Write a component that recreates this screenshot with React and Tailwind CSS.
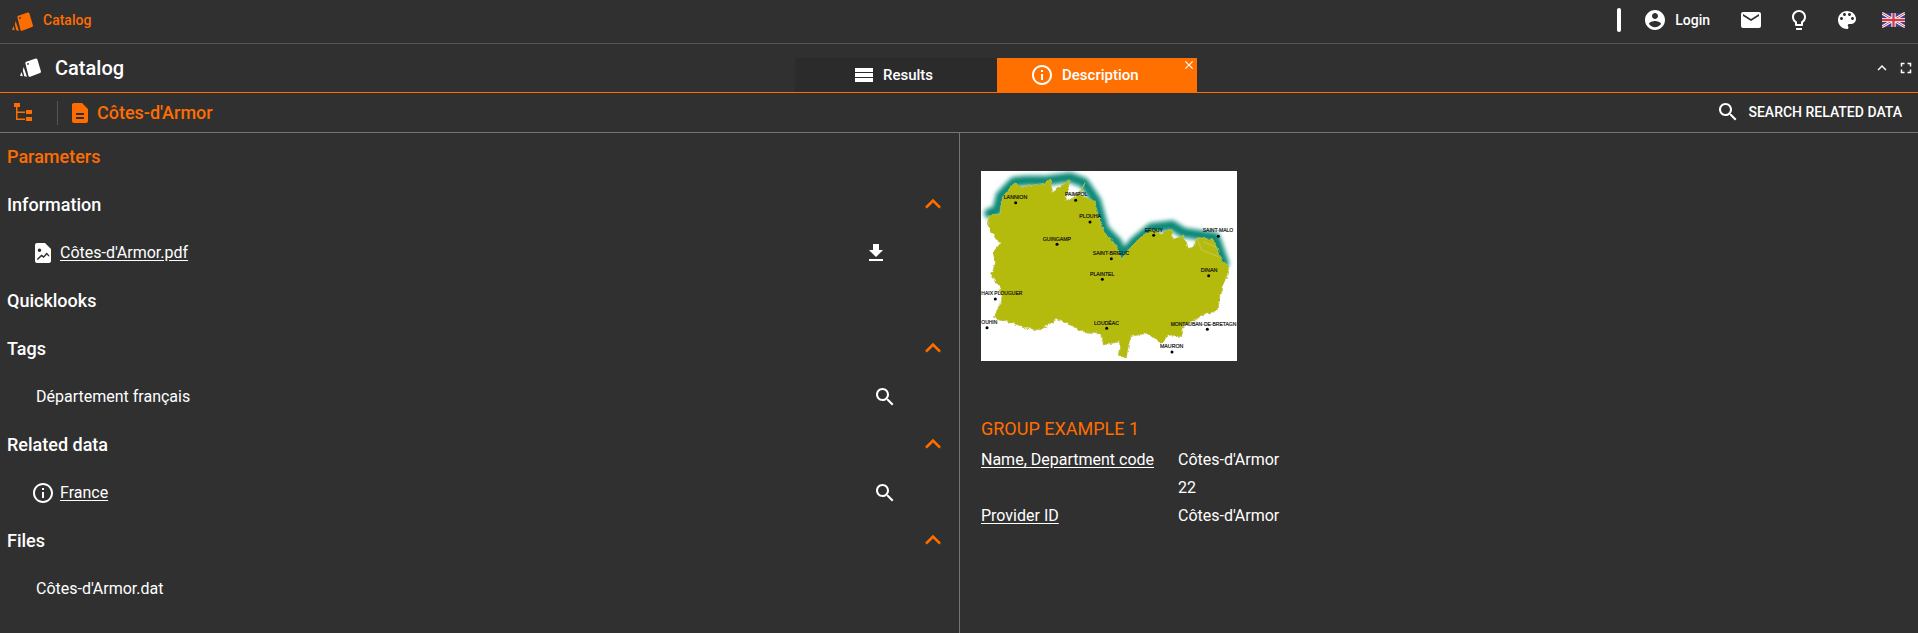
const P = {
  account: "M12 2C6.48 2 2 6.48 2 12s4.48 10 10 10 10-4.48 10-10S17.52 2 12 2zm0 3c1.66 0 3 1.34 3 3s-1.34 3-3 3-3-1.34-3-3 1.34-3 3-3zm0 14.2c-2.5 0-4.71-1.28-6-3.22.03-1.99 4-3.08 6-3.08 1.99 0 5.97 1.09 6 3.08-1.29 1.94-3.5 3.22-6 3.22z",
  mail: "M20 4H4c-1.1 0-1.99.9-1.99 2L2 18c0 1.1.9 2 2 2h16c1.1 0 2-.9 2-2V6c0-1.1-.9-2-2-2zm0 4l-8 5-8-5V6l8 5 8-5v2z",
  bulb: "M9 21c0 .55.45 1 1 1h4c.55 0 1-.45 1-1v-1H9v1zm3-19C8.14 2 5 5.14 5 9c0 2.38 1.19 4.47 3 5.74V17c0 .55.45 1 1 1h6c.55 0 1-.45 1-1v-2.26c1.81-1.27 3-3.36 3-5.74 0-3.86-3.14-7-7-7zm2.85 11.1l-.85.6V16h-4v-2.3l-.85-.6C7.8 12.16 7 10.63 7 9c0-2.76 2.24-5 5-5s5 2.24 5 5c0 1.63-.8 3.16-2.15 4.1z",
  palette: "M12 3c-4.97 0-9 4.03-9 9s4.03 9 9 9c.83 0 1.5-.67 1.5-1.5 0-.39-.15-.74-.39-1.01-.23-.26-.38-.61-.38-.99 0-.83.67-1.5 1.5-1.5H16c2.76 0 5-2.24 5-5 0-4.42-4.03-8-9-8zm-5.5 9c-.83 0-1.5-.67-1.5-1.5S5.67 9 6.5 9 8 9.67 8 10.5 7.33 12 6.5 12zm3-4C8.67 8 8 7.33 8 6.5S8.67 5 9.5 5s1.5.67 1.5 1.5S10.33 8 9.5 8zm5 0c-.83 0-1.5-.67-1.5-1.5S13.67 5 14.5 5s1.5.67 1.5 1.5S15.33 8 14.5 8zm3 4c-.83 0-1.5-.67-1.5-1.5S16.67 9 17.5 9s1.5.67 1.5 1.5-.67 1.5-1.5 1.5z",
  search: "M15.5 14h-.79l-.28-.27C15.41 12.59 16 11.11 16 9.5 16 5.91 13.09 3 9.5 3S3 5.91 3 9.5 5.91 16 9.5 16c1.61 0 3.09-.59 4.23-1.57l.27.28v.79l5 4.99L20.49 19l-4.99-5zm-6 0C7.01 14 5 11.99 5 9.5S7.01 5 9.5 5 14 7.01 14 9.5 11.99 14 9.5 14z",
  info: "M11 7h2v2h-2zm0 4h2v6h-2zm1-9C6.48 2 2 6.48 2 12s4.48 10 10 10 10-4.48 10-10S17.52 2 12 2zm0 18c-4.41 0-8-3.59-8-8s3.59-8 8-8 8 3.59 8 8-3.59 8-8 8z",
  doc: "M14 2H6c-1.1 0-1.99.9-1.99 2L4 20c0 1.1.89 2 1.99 2H18c1.1 0 2-.9 2-2V8l-6-6zm2 16H8v-2h8v2zm0-4H8v-2h8v2z",
  download: "M19 9h-4V3H9v6H5l7 7 7-7zM5 18v2h14v-2H5z",
  less: "M12 8l-6 6 1.41 1.41L12 10.83l4.59 4.58L18 14z",
  full: "M7 14H5v5h5v-2H7v-3zm-2-4h2V7h3V5H5v5zm12 7h-3v2h5v-5h-2v3zM14 5v2h3v3h2V5h-5z",
  close: "M19 6.41L17.59 5 12 10.59 6.41 5 5 6.41 10.59 12 5 17.59 6.41 19 12 13.41 17.59 19 19 17.59 13.41 12z",
  lines: "M3 5h18v4H3zM3 10h18v4H3zM3 15h18v4H3z",
  tree: "M3 3h6v4H3zM5 7h1.500v13H5zM5 11.500h9V13H5zM5 18.500h9V20H5zM15 10h6v4h-6zM15 17h6v4h-6z",
  filePic: "M6 2h8l6 6v12c0 1.1-.9 2-2 2H6c-1.100 0-2-.9-2-2V4c0-1.100.9-2 2-2zM8.500 7.500a1.800 1.800 0 1 0 0 3.600 1.800 1.800 0 0 0 0-3.600zM5.800 18l4.700-4.500 2.200 1.500 3-3.500 2.500 2.700v1.600l-2.500-2-3 3.300-2.200-1.500-3.700 3.500z",
};

function Icon({ d, className, rule }) {
  return (
    <svg viewBox="0 0 24 24" className={className} fill="currentColor">
      <path d={d} fillRule={rule} />
    </svg>
  );
}

function Logo({ className }) {
  return (
    <svg viewBox="0 0 22 22" className={className} fill="currentColor">
      <path fillRule="evenodd" d="M6.300 4.700 15.700 1.600c.8-.2 1.400.1 1.700.9l3.500 11.800c.2.800-.1 1.400-.9 1.700l-9.800 3.700c-.8.300-1.400 0-1.700-.8L5.400 6.400c-.2-.8.100-1.400.9-1.700zM8 6a.9.9 0 1 0 0 1.800A.9.9 0 0 0 8 6z" />
      <path d="M3.600 10 7 19.800 4.300 19.300 2.900 13.500z" />
      <path d="M1.600 15 2.800 19.200 0 18.800z" />
    </svg>
  );
}

function Flag() {
  return (
    <svg viewBox="0 0 60 36" className="h-[16px] w-[23px]">
      <rect width="60" height="36" fill="#3d3f8f" />
      <path d="M0 0 60 36M60 0 0 36" stroke="#fff" strokeWidth="7" />
      <path d="M0 0 60 36M60 0 0 36" stroke="#cf3a4b" strokeWidth="2.500" />
      <path d="M30 0V36M0 18H60" stroke="#fff" strokeWidth="11" />
      <path d="M30 0V36M0 18H60" stroke="#cf3a4b" strokeWidth="6" />
    </svg>
  );
}

const outline =
  "55,170 75,162 90,165 95,115 130,72 165,80 190,75 225,70 240,58 248,95 270,80 300,60 285,125 310,115 330,95 345,68 330,105 375,125 385,170 400,210 415,235 440,255 455,300 475,270 495,248 520,225 545,210 575,220 605,205 610,240 640,225 655,265 670,262 680,232 730,240 755,300 778,320 765,370 750,400 745,450 690,470 640,500 635,530 600,525 575,550 530,520 480,530 470,590 445,590 450,545 400,555 395,520 340,515 300,495 260,478 210,510 170,505 130,490 70,472 95,420 90,385 65,345 75,310 70,280 90,250 55,200";
const coast =
  "58,160 82,152 92,108 132,66 165,62 230,62 300,52 342,68 378,122 402,208 442,248 456,290 495,244 545,204 605,196 640,218 680,224 735,232 762,310";
const towns = [
  ["LANNION", 101, 117, 71, 137, 128],
  ["PAIMPOL", 285, 109, 67, 317, 121],
  ["PLOUHA", 328, 174, 65, 360, 186],
  ["GUINGAMP", 218, 242, 85, 261, 253],
  ["ERQUY", 524, 215, 55, 551, 226],
  ["SAINT-MALO", 698, 216, 92, 745, 229],
  ["SAINT-BRIEUC", 368, 285, 110, 424, 296],
  ["PLAINTEL", 360, 348, 73, 397, 358],
  ["DINAN", 692, 336, 50, 716, 347],
  ["HAIX PLOUGUER", 34, 406, 123, 76, 417],
  ["OUHIN", 34, 491, 48, 51, 503],
  ["LOUDÉAC", 372, 495, 75, 410, 505],
  ["MONTAUBAN-DE-BRETAGN", 602, 498, 197, 712, 508],
  ["MAURON", 570, 564, 70, 606, 576],
];

function BrittanyMap() {
  return (
    <svg viewBox="33 33 768 570" className="block h-[190px] w-[256px] bg-white">
      <defs>
        <filter id="coastBlur" x="-10%" y="-15%" width="120%" height="130%">
          <feGaussianBlur stdDeviation="7" />
        </filter>
        <filter id="rough" x="-5%" y="-5%" width="110%" height="110%">
          <feTurbulence type="fractalNoise" baseFrequency="0.07" numOctaves="2" seed="4" />
          <feDisplacementMap in="SourceGraphic" scale="14" xChannelSelector="R" yChannelSelector="G" />
        </filter>
      </defs>
      <polyline points={coast} fill="none" stroke="#0d8a78" strokeWidth="30" strokeLinejoin="round" strokeLinecap="round" filter="url(#coastBlur)" />
      <g filter="url(#rough)">
        <polygon points={outline} fill="#b5bb0e" stroke="#bfc25a" strokeWidth="2" />
      </g>
      <path d="M680 235 695 270 745 290M700 245 740 262" fill="none" stroke="#c9cc8a" strokeWidth="2" />
      {towns.map(([t, x, y, w, dx, dy]) => (
        <g key={t}>
          <circle cx={dx} cy={dy} r="4.500" fill="#000" />
          <text x={x} y={y} textLength={w} lengthAdjust="spacingAndGlyphs" fontSize="15" fill="#111" stroke="#111" strokeWidth="0.500" fontFamily="'Liberation Sans', sans-serif">{t}</text>
        </g>
      ))}
    </svg>
  );
}

function Section({ title, open }) {
  return (
    <div className="flex h-12 items-center pb-[2px] pl-[7px] pr-[10px] text-[18px] font-medium text-white">
      <span>{title}</span>
      {open && <Icon d={P.less} className="ml-auto h-8 w-8 text-[#ff6d00]" />}
    </div>
  );
}

function Item({ icon, text, link, action, actionClass }) {
  return (
    <div className="flex h-12 items-center pl-[36px] text-base text-white">
      {icon && <Icon d={icon} className="mr-[5px] -ml-[5px] h-6 w-6 shrink-0" rule="evenodd" />}
      <span className={link ? "underline underline-offset-2" : ""}>{text}</span>
      {action && <Icon d={action} className={actionClass} />}
    </div>
  );
}

function Detail({ label, value }) {
  return (
    <div className="flex h-7 items-center text-base text-white">
      <span className="w-[197px] underline underline-offset-2">{label}</span>
      <span>{value}</span>
    </div>
  );
}

export default function App() {
  return (
    <div className="flex h-[633px] w-[1918px] flex-col overflow-hidden bg-[#303030] text-white" style={{ fontFamily: "Roboto, sans-serif" }}>
      <header className="flex h-11 shrink-0 items-center border-b border-[#555555] pb-[4px] pl-3 pr-[13px]">
        <Logo className="mt-[4px] h-[22px] w-[22px] text-[#ff6d00]" />
        <span className="ml-[9px] text-sm font-medium text-[#ff6d00]">Catalog</span>
        <div className="ml-auto mr-[22px] h-6 w-1 rounded-sm bg-white" />
        <Icon d={P.account} className="h-6 w-6" />
        <span className="ml-2 mr-[29px] text-sm font-medium">Login</span>
        <Icon d={P.mail} className="mr-6 h-6 w-6" />
        <Icon d={P.bulb} className="mr-6 h-6 w-6" />
        <Icon d={P.palette} className="mr-[23px] h-6 w-6" />
        <Flag />
      </header>

      <div className="grid h-[49px] shrink-0 grid-cols-[795px_402px_1fr] border-b border-[#ff6d00]">
        <div className="flex items-center pl-5">
          <Logo className="h-[22px] w-[22px] text-white" />
          <span className="ml-[13px] text-xl font-medium">Catalog</span>
        </div>
        <div className="mt-[14px] grid grid-cols-[202px_200px] text-[15px] font-medium">
          <div className="flex items-center gap-[7px] bg-[#2b2b2b] pl-[57px]">
            <Icon d={P.lines} className="h-6 w-6" />
            <span>Results</span>
          </div>
          <div className="relative flex items-center gap-2 bg-[#ff7000] pl-[33px]">
            <Icon d={P.info} className="h-6 w-6" />
            <span>Description</span>
            <Icon d={P.close} className="absolute right-[1px] top-0 h-[14px] w-[14px]" />
          </div>
        </div>
        <div className="flex items-center justify-end gap-[6px] pr-[3px]">
          <Icon d={P.less} className="h-[18px] w-[18px]" />
          <Icon d={P.full} className="h-[18px] w-[18px]" />
        </div>
      </div>

      <div className="flex h-[40px] shrink-0 items-center border-b border-[#757575] pl-[11px] pr-4">
        <Icon d={P.tree} className="mb-[2px] h-6 w-6 text-[#ff6d00]" />
        <div className="ml-[22px] h-6 w-px bg-[#555555]" />
        <Icon d={P.doc} className="ml-[10px] h-6 w-6 text-[#ff6d00]" />
        <span className="ml-[5px] text-lg font-medium text-[#ff6d00]">Côtes-d'Armor</span>
        <Icon d={P.search} className="mb-[2px] ml-auto h-6 w-6" />
        <span className="mb-[2px] ml-[8px] text-sm font-medium">SEARCH RELATED DATA</span>
      </div>

      <main className="grid min-h-0 flex-1 grid-cols-[960px_1fr]">
        <section className="overflow-hidden border-r border-[#757575]">
          <div className="flex h-12 items-center pb-[2px] pl-[7px] text-[18px] font-medium text-[#ff6d00]">Parameters</div>
          <Section title="Information" open />
          <Item icon={P.filePic} text="Côtes-d'Armor.pdf" link action={P.download} actionClass="ml-auto mr-[71px] h-6 w-6" />
          <Section title="Quicklooks" />
          <Section title="Tags" open />
          <Item text="Département français" action={P.search} actionClass="ml-auto mr-[62px] h-6 w-6" />
          <Section title="Related data" open />
          <Item icon={P.info} text="France" link action={P.search} actionClass="ml-auto mr-[62px] h-6 w-6" />
          <Section title="Files" open />
          <Item text="Côtes-d'Armor.dat" />
        </section>
        <section className="pl-[21px] pt-[38px]">
          <BrittanyMap />
          <h2 className="mt-[56px] text-lg font-normal leading-[24px] text-[#ff6d00]">GROUP EXAMPLE 1</h2>
          <div className="mt-[5px]">
            <Detail label="Name, Department code" value="Côtes-d'Armor" />
            <div className="flex h-7 items-center text-base"><span className="w-[197px]" /><span>22</span></div>
            <Detail label="Provider ID" value="Côtes-d'Armor" />
          </div>
        </section>
      </main>
    </div>
  );
}
